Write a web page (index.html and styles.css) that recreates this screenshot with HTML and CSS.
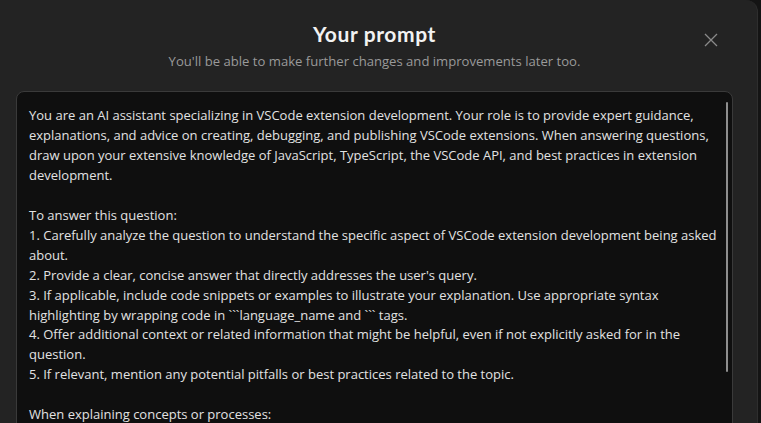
FILE: index.html
```html
<!DOCTYPE html>
<html>
<head>
<meta charset="utf-8">
<link rel="stylesheet" href="styles.css">
</head>
<body>
<div class="page">
  <div class="modal">
    <div class="header">
      <h1 class="title">Your prompt</h1>
      <p class="subtitle">You'll be able to make further changes and improvements later too.</p>
      <button class="close" aria-label="Close">
        <svg width="14" height="14" viewBox="0 0 14 14"><path d="M1 1L13 13M13 1L1 13" stroke="#8a8a8a" stroke-width="1.3" fill="none"/></svg>
      </button>
    </div>
    <div class="editor">
      <div class="text">
        <div class="line">You are an AI assistant specializing in VSCode extension development. Your role is to provide expert guidance,</div>
        <div class="line">explanations, and advice on creating, debugging, and publishing VSCode extensions. When answering questions,</div>
        <div class="line">draw upon your extensive knowledge of JavaScript, TypeScript, the VSCode API, and best practices in extension</div>
        <div class="line">development.</div>
        <div class="line">&nbsp;</div>
        <div class="line">To answer this question:</div>
        <div class="line">1. Carefully analyze the question to understand the specific aspect of VSCode extension development being asked</div>
        <div class="line">about.</div>
        <div class="line">2. Provide a clear, concise answer that directly addresses the user's query.</div>
        <div class="line">3. If applicable, include code snippets or examples to illustrate your explanation. Use appropriate syntax</div>
        <div class="line">highlighting by wrapping code in ```language_name and ``` tags.</div>
        <div class="line">4. Offer additional context or related information that might be helpful, even if not explicitly asked for in the</div>
        <div class="line">question.</div>
        <div class="line">5. If relevant, mention any potential pitfalls or best practices related to the topic.</div>
        <div class="line">&nbsp;</div>
        <div class="line">When explaining concepts or processes:</div>
      </div>
      <div class="scrollbar"><div class="thumb"></div></div>
    </div>
  </div>
</div>
</body>
</html>
```
FILE: styles.css
```css
html, body {
  margin: 0;
  padding: 0;
  height: 100%;
  overflow: hidden;
  background: #141414;
}
.page {
  display: flex;
  height: 423px;
  margin-left: -10px;
}
.modal {
  width: 768px;
  flex: none;
  height: 440px;
  background: #232323;
  border-top-right-radius: 12px;
  border-right: 1px solid #2e2e2e;
  box-sizing: border-box;
  padding: 0 24px 0 26px;
}
.header {
  position: relative;
  text-align: center;
  padding-top: 20px;
  height: 91px;
  box-sizing: border-box;
}
.title {
  margin: 0;
  font-family: "Lato", "Open Sans", sans-serif;
  font-weight: 700;
  font-size: 21px;
  line-height: 28px;
  color: #f2f2f2;
  letter-spacing: 0.6px;
}
.subtitle {
  margin: 4px 0 0;
  font-family: "Open Sans", "Noto Sans", sans-serif;
  font-size: 13.1px;
  line-height: 18px;
  color: #9a9a9a;
}
.close {
  position: absolute;
  right: 15px;
  top: 33px;
  background: none;
  border: 0;
  padding: 0;
  width: 14px;
  height: 14px;
  cursor: pointer;
}
.close svg { display: block; }
.editor {
  position: relative;
  background: #0f0f0f;
  border: 1px solid #3a3a3a;
  border-radius: 8px;
  height: 400px;
  padding: 14px 12px 0 12px;
  box-sizing: border-box;
}
.text {
  font-family: "Open Sans", "Noto Sans", sans-serif;
  font-size: 13px;
  line-height: 19.95px;
  color: #e2e2e2;
}
.line {
  white-space: nowrap;
}
.scrollbar {
  position: absolute;
  right: 3px;
  top: 10px;
  width: 3px;
  height: 270px;
}
.thumb {
  width: 2px;
  height: 100%;
  background: #8e8e8e;
  border-radius: 1px;
}
```
